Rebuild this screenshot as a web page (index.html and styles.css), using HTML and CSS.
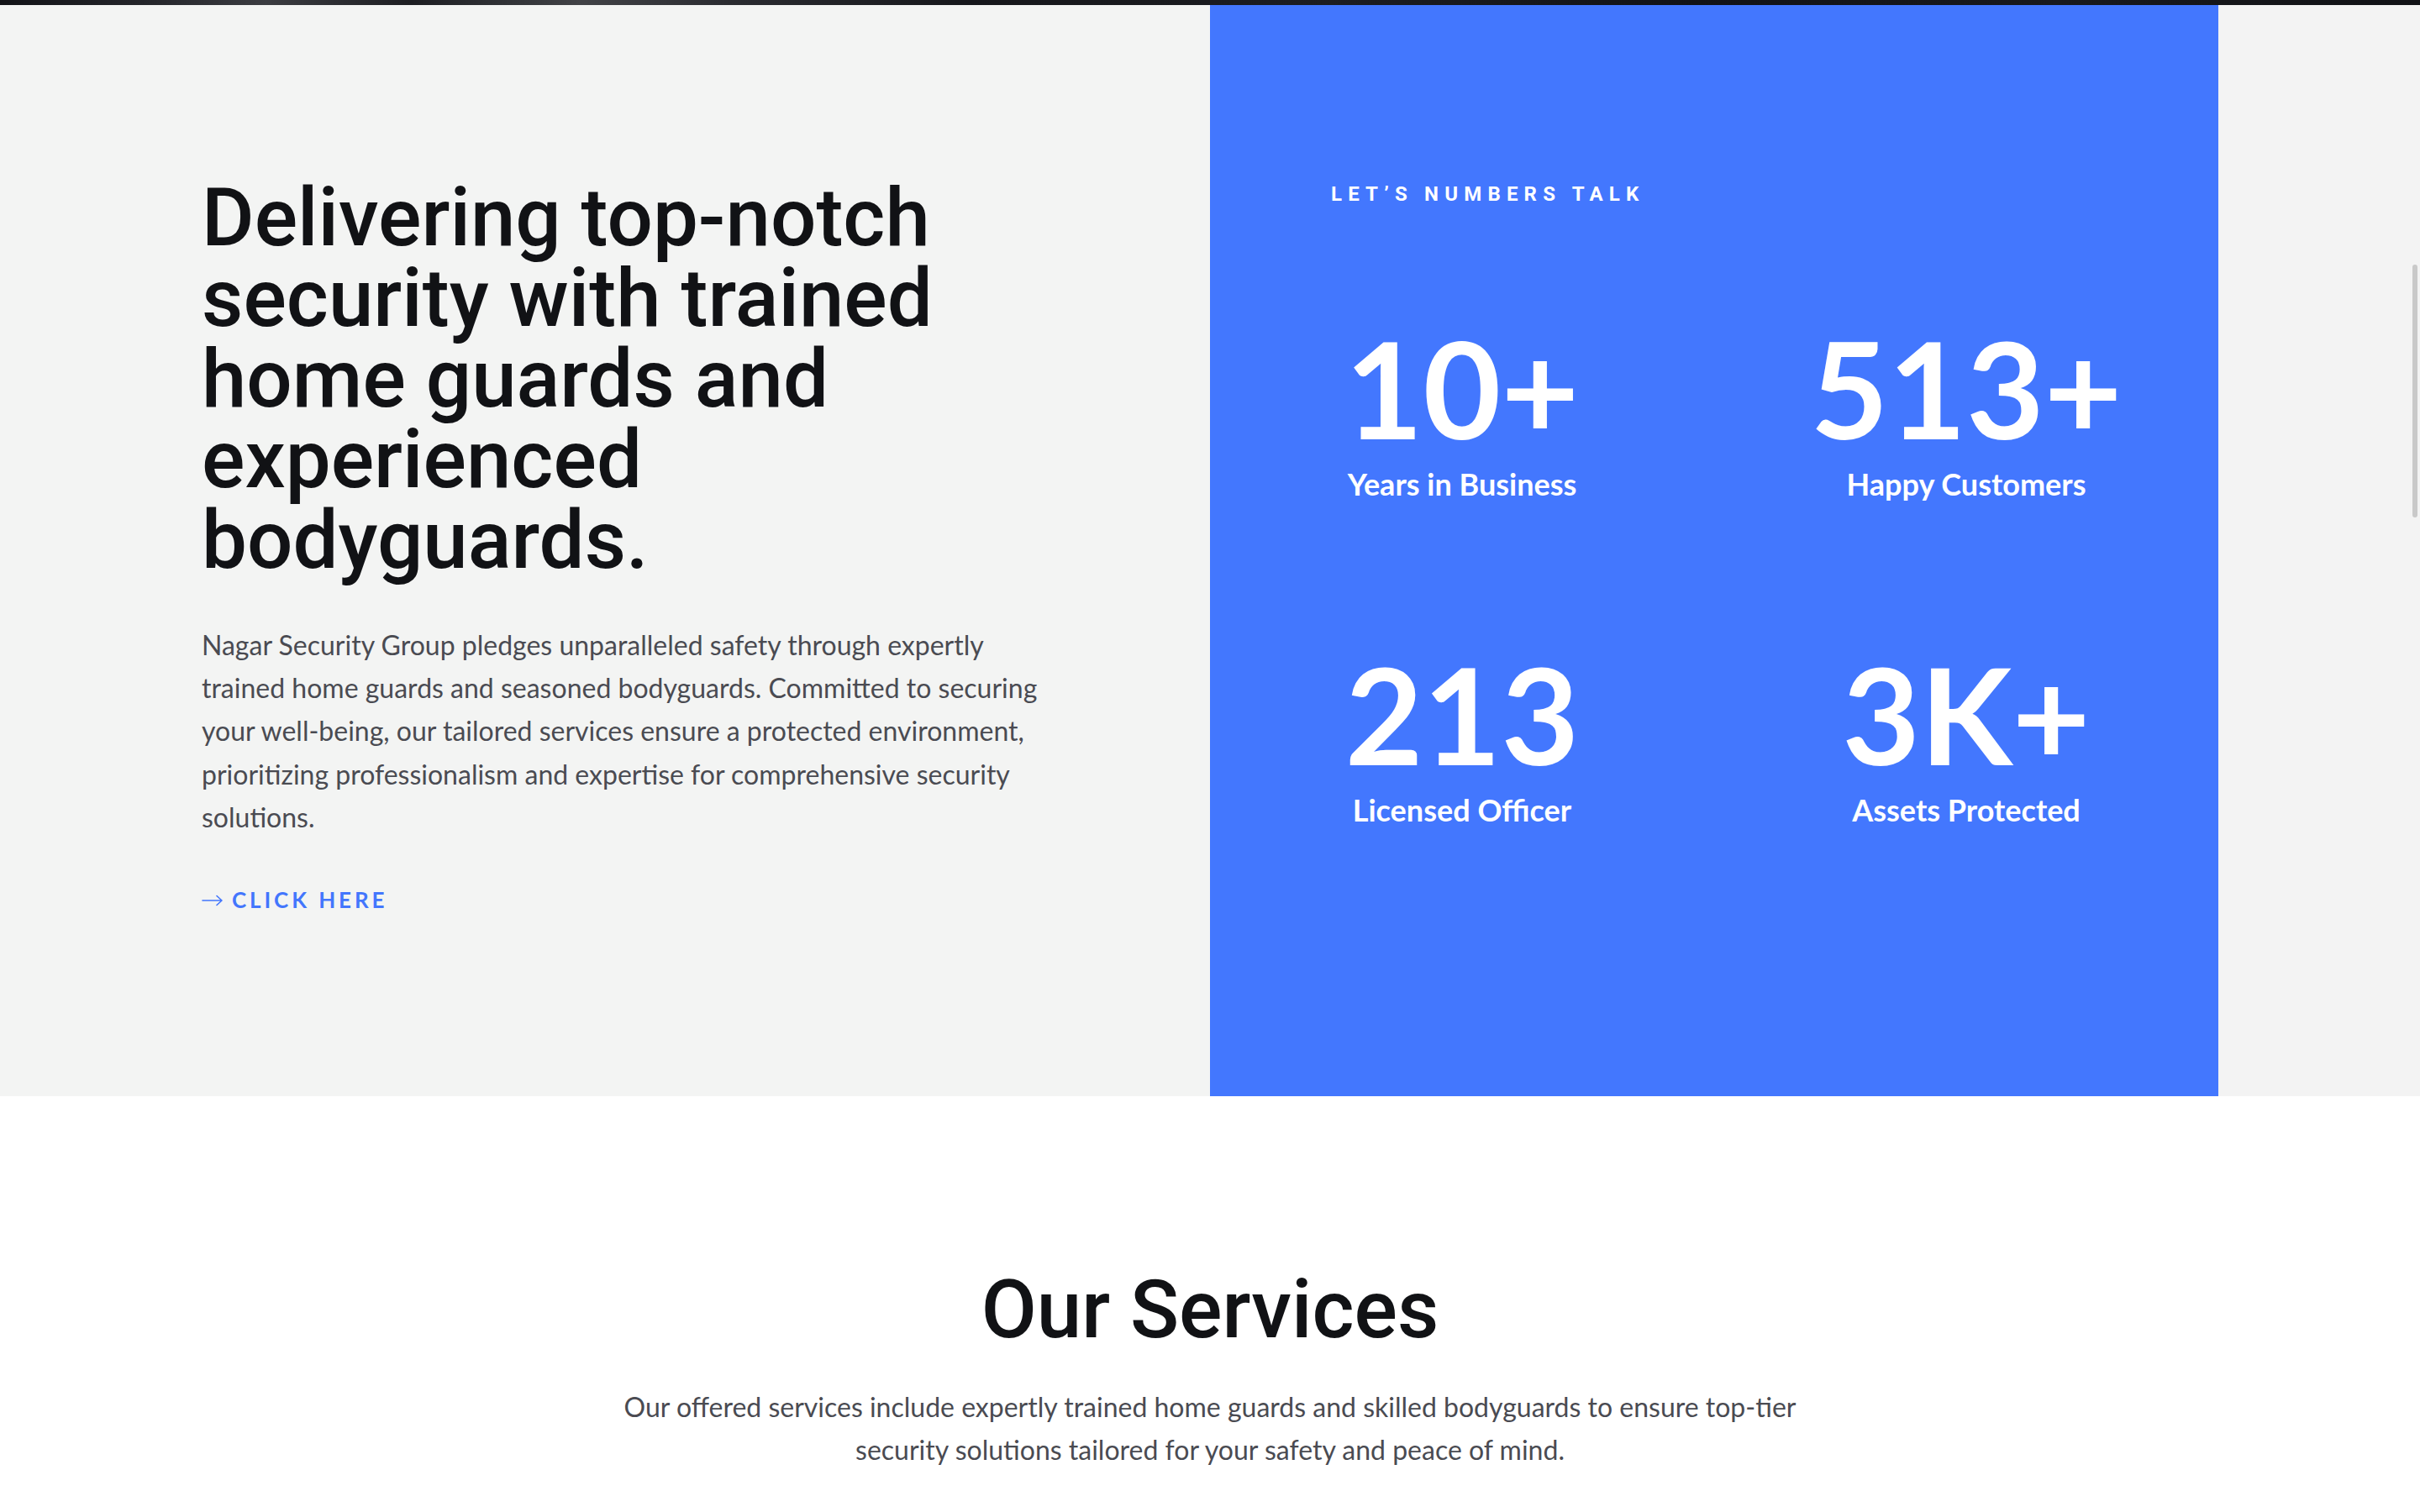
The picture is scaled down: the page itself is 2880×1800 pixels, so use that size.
FILE: index.html
```html
<!DOCTYPE html>
<html lang="en">
<head>
<meta charset="utf-8">
<title>Nagar Security Group</title>
<link rel="stylesheet" href="styles.css">
</head>
<body>
<div class="hero-edge"></div>
<section class="about">
  <div class="about-text">
    <h2 class="about-title">Delivering top-notch security with trained home guards and experienced bodyguards.</h2>
    <p class="about-desc">Nagar Security Group pledges unparalleled safety through expertly trained home guards and seasoned bodyguards. Committed to securing your well-being, our tailored services ensure a protected environment, prioritizing professionalism and expertise for comprehensive security solutions.</p>
    <a class="cta" href="#">
      <svg class="cta-arrow" width="26" height="14" viewBox="0 0 26 14" fill="none" stroke="currentColor" stroke-width="1.6" stroke-linecap="round" stroke-linejoin="round"><path d="M1 7h23M18 1.5L24 7l-6 5.5"/></svg>
      <span>CLICK HERE</span>
    </a>
  </div>
  <div class="numbers">
    <div class="numbers-eyebrow">LET’S NUMBERS TALK</div>
    <div class="numbers-grid">
      <div class="stat"><div class="stat-value">10+</div><div class="stat-label">Years in Business</div></div>
      <div class="stat"><div class="stat-value">513+</div><div class="stat-label">Happy Customers</div></div>
      <div class="stat"><div class="stat-value">213</div><div class="stat-label">Licensed Officer</div></div>
      <div class="stat"><div class="stat-value">3K+</div><div class="stat-label">Assets Protected</div></div>
    </div>
  </div>
  <div class="about-aside"></div>
</section>
<section class="services">
  <h2 class="services-title">Our Services</h2>
  <p class="services-desc">Our offered services include expertly trained home guards and skilled bodyguards to ensure top-tier security solutions tailored for your safety and peace of mind.</p>
</section>
<div class="scroll-thumb"></div>
</body>
</html>
```
FILE: styles.css
```css
html {
  overflow: hidden;
}
body {
  margin: 0;
  background: #ffffff;
  font-family: Lato, "Liberation Sans", sans-serif;
}
.hero-edge {
  height: 6px;
  background: linear-gradient(90deg, #121317 0%, #24252a 6%, #3b3c41 11%, #1d1e22 17%, #414246 24%, #2b2c31 30%, #16171b 40%, #1c1d21 55%, #111216 70%, #18191d 85%, #111216 100%);
}
.about {
  display: grid;
  grid-template-columns: 1440px 1200px 1fr;
  height: 1299px;
  background: #f3f4f3;
}
.about-text {
  padding: 205px 190px 0 240px;
}
.about-title {
  margin: 0;
  font-family: Roboto, "Liberation Sans", sans-serif;
  font-weight: 500;
  font-size: 96px;
  line-height: 96px;
  color: #111215;
}
.about-desc {
  margin: 51px 0 0;
  font-family: Lato, "Liberation Sans", sans-serif;
  font-size: 32px;
  line-height: 1.6;
  color: #4a4b52;
}
.cta {
  margin-top: 58px;
  display: inline-flex;
  align-items: center;
  gap: 10px;
  font-family: Lato, "Liberation Sans", sans-serif;
  font-weight: 700;
  font-size: 26px;
  line-height: 1.2;
  letter-spacing: 0.15em;
  color: #4376fd;
  text-decoration: none;
}
.cta-arrow {
  display: block;
}
.numbers {
  background: #4377fe;
  padding-top: 211px;
  color: #ffffff;
}
.numbers-eyebrow {
  padding-left: 144px;
  font-family: Roboto, "Liberation Sans", sans-serif;
  font-weight: 700;
  font-size: 24px;
  line-height: 1.2;
  letter-spacing: 7.2px;
}
.numbers-grid {
  margin-top: 135px;
  display: grid;
  grid-template-columns: 1fr 1fr;
  row-gap: 171px;
}
.stat {
  text-align: center;
}
.stat-value {
  font-family: Lato, "Liberation Sans", sans-serif;
  font-weight: 700;
  font-size: 160px;
  line-height: 1;
}
.stat-label {
  margin-top: 14px;
  font-family: Lato, "Liberation Sans", sans-serif;
  font-weight: 700;
  font-size: 36px;
  line-height: 1.2;
}
.about-aside {
  background: #f3f3f3;
}
.services {
  padding-top: 206px;
  text-align: center;
}
.services-title {
  margin: 0;
  font-family: Roboto, "Liberation Sans", sans-serif;
  font-weight: 500;
  font-size: 96px;
  line-height: 96px;
  color: #111215;
}
.services-desc {
  width: 1440px;
  margin: 42px auto 0;
  font-family: Lato, "Liberation Sans", sans-serif;
  font-size: 32px;
  line-height: 1.6;
  color: #4a4b52;
}
.scroll-thumb {
  position: fixed;
  right: 3px;
  top: 315px;
  width: 6px;
  height: 301px;
  border-radius: 3px;
  background: #c9c9c9;
}
```
